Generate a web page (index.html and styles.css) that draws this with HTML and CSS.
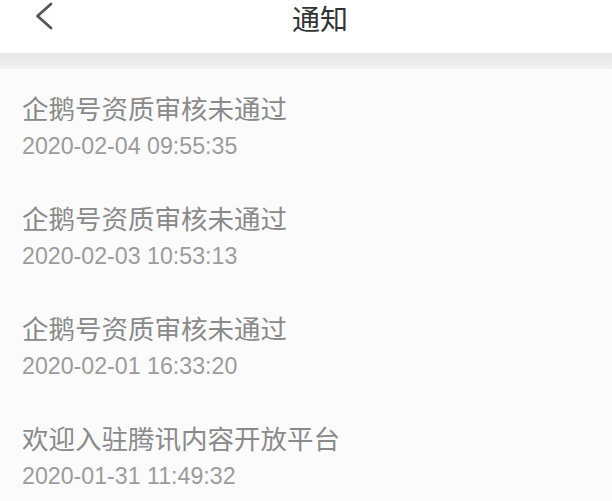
FILE: index.html
```html
<!DOCTYPE html>
<html lang="zh">
<head>
<meta charset="utf-8">
<link rel="stylesheet" href="styles.css">
</head>
<body>
<header class="nav">
  <span class="back" aria-label="返回">
    <svg width="20" height="28" viewBox="0 0 20 28"><polyline points="17,2 3.5,14 17,26" fill="none" stroke="#555" stroke-width="2.8" stroke-linecap="round" stroke-linejoin="round"/></svg>
  </span>
  <h1 class="title">通知</h1>
</header>
<div class="band"></div>
<ul class="list">
  <li class="item"><p class="item-title">企鹅号资质审核未通过</p><p class="item-time">2020-02-04 09:55:35</p></li>
  <li class="item"><p class="item-title">企鹅号资质审核未通过</p><p class="item-time">2020-02-03 10:53:13</p></li>
  <li class="item"><p class="item-title">企鹅号资质审核未通过</p><p class="item-time">2020-02-01 16:33:20</p></li>
  <li class="item"><p class="item-title">欢迎入驻腾讯内容开放平台</p><p class="item-time">2020-01-31 11:49:32</p></li>
</ul>
</body>
</html>
```
FILE: styles.css
```css
* { box-sizing: border-box; }
html, body { margin: 0; padding: 0; }
body {
  width: 612px;
  height: 501px;
  overflow: hidden;
  background: #fbfbfb;
  font-family: "Noto Sans CJK SC", "Noto Sans", sans-serif;
}
.nav {
  position: relative;
  height: 53px;
  background: #fff;
  display: flex;
  justify-content: center;
  align-items: flex-start;
  padding-left: 28px;
}
.back {
  position: absolute;
  left: 34px;
  top: 2px;
  display: block;
  line-height: 0;
}
.title {
  margin: 0;
  padding-top: 1px;
  font-size: 28px;
  font-weight: 400;
  color: #333;
  line-height: 34px;
}
.band {
  height: 16px;
  background: linear-gradient(#e6e6e6, #ececec 60%, #f2f2f2);
}
.list {
  list-style: none;
  margin: 0;
  padding: 21px 0 0 22px;
}
.item {
  height: 110px;
}
.item-title {
  margin: 0;
  font-size: 26.5px;
  line-height: 36px;
  color: #8a8a8a;
}
.item-time {
  margin: 4px 0 0;
  font-family: "Liberation Sans", "Noto Sans", sans-serif;
  font-size: 23.2px;
  line-height: 32px;
  color: #9c9c9c;
}
```
